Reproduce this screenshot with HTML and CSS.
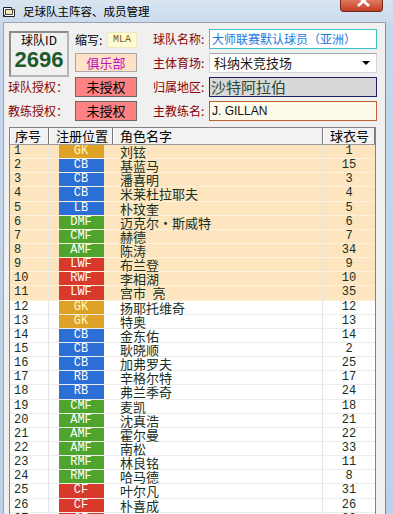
FILE: index.html
```html
<!DOCTYPE html>
<html lang="zh">
<head>
    <meta charset="UTF-8">
    <meta name="viewport" content="width=device-width, initial-scale=1.0">
    <title>足球队主阵容、成员管理</title>
    <link rel="stylesheet" href="styles.css">
</head>
<body>
    <div class="window">
        <div class="titlebar">
            <svg class="app-icon" width="14" height="13" viewBox="0 0 14 13">
                <path d="M1.5 2.5h8v2h3v7h-11z" fill="#fff" stroke="#222"/>
                <path d="M3.5 4.5h7v5h-7z" fill="#f4e9b8" stroke="#444"/>
                <path d="M1.5 11.5l2-2" stroke="#222"/>
            </svg>
            <span class="title">足球队主阵容、成员管理</span>
            <div class="close-btn">
                <svg width="43" height="12" viewBox="0 0 43 12">
                    <path d="M18 -4L29 6M29 -4L18 6" stroke="#fff" stroke-width="2.6"/>
                </svg>
            </div>
        </div>

        <div class="client">
            <div class="team-form">
                <div class="team-id">
                    <span class="id-label">球队ID</span>
                    <span class="id-value">2696</span>
                </div>
                <div class="abbr">
                    <span>缩写:</span>
                    <span class="abbr-box">MLA</span>
                </div>
                <div class="field-label">球队名称:</div>
                <div class="input input-name">大师联赛默认球员（亚洲）</div>

                <div class="club-btn">俱乐部</div>
                <div class="field-label">主体育场:</div>
                <div class="input input-select">科纳米竞技场<span class="arrow"></span></div>

                <div class="side-label">球队授权：</div>
                <div class="auth-box">未授权</div>
                <div class="field-label">归属地区:</div>
                <div class="input input-region">沙特阿拉伯</div>

                <div class="side-label">教练授权：</div>
                <div class="auth-box">未授权</div>
                <div class="field-label">主教练名:</div>
                <div class="input input-coach">J. GILLAN</div>
            </div>

            <div class="roster">
                <div class="roster-head">
                    <div class="head-cell first">序号</div>
                    <div class="head-cell">注册位置</div>
                    <div class="head-cell">角色名字</div>
                    <div class="head-cell">球衣号</div>
                </div>

                <div class="player starter"><span class="num">1</span><span class="pos"><span class="badge gk">GK</span></span><span class="name">刘铉</span><span class="shirt">1</span></div>
                <div class="player starter"><span class="num">2</span><span class="pos"><span class="badge def">CB</span></span><span class="name">基蓝马</span><span class="shirt">15</span></div>
                <div class="player starter"><span class="num">3</span><span class="pos"><span class="badge def">CB</span></span><span class="name">潘喜明</span><span class="shirt">3</span></div>
                <div class="player starter"><span class="num">4</span><span class="pos"><span class="badge def">CB</span></span><span class="name">米莱杜拉耶夫</span><span class="shirt">4</span></div>
                <div class="player starter"><span class="num">5</span><span class="pos"><span class="badge def">LB</span></span><span class="name">朴玟奎</span><span class="shirt">5</span></div>
                <div class="player starter"><span class="num">6</span><span class="pos"><span class="badge mid">DMF</span></span><span class="name">迈克尔・斯威特</span><span class="shirt">6</span></div>
                <div class="player starter"><span class="num">7</span><span class="pos"><span class="badge mid">CMF</span></span><span class="name">赫德</span><span class="shirt">7</span></div>
                <div class="player starter"><span class="num">8</span><span class="pos"><span class="badge mid">AMF</span></span><span class="name">陈涛</span><span class="shirt">34</span></div>
                <div class="player starter"><span class="num">9</span><span class="pos"><span class="badge fwd">LWF</span></span><span class="name">布兰登</span><span class="shirt">9</span></div>
                <div class="player starter"><span class="num">10</span><span class="pos"><span class="badge fwd">RWF</span></span><span class="name">李相湖</span><span class="shirt">10</span></div>
                <div class="player starter"><span class="num">11</span><span class="pos"><span class="badge fwd">LWF</span></span><span class="name">宫市&ensp;亮</span><span class="shirt">35</span></div>
                <div class="player"><span class="num">12</span><span class="pos"><span class="badge gk">GK</span></span><span class="name">扬耶托维奇</span><span class="shirt">12</span></div>
                <div class="player"><span class="num">13</span><span class="pos"><span class="badge gk">GK</span></span><span class="name">特奥</span><span class="shirt">13</span></div>
                <div class="player"><span class="num">14</span><span class="pos"><span class="badge def">CB</span></span><span class="name">金东佑</span><span class="shirt">14</span></div>
                <div class="player"><span class="num">15</span><span class="pos"><span class="badge def">CB</span></span><span class="name">耿晓顺</span><span class="shirt">2</span></div>
                <div class="player"><span class="num">16</span><span class="pos"><span class="badge def">CB</span></span><span class="name">加弗罗夫</span><span class="shirt">25</span></div>
                <div class="player"><span class="num">17</span><span class="pos"><span class="badge def">RB</span></span><span class="name">辛格尔特</span><span class="shirt">17</span></div>
                <div class="player"><span class="num">18</span><span class="pos"><span class="badge def">RB</span></span><span class="name">弗兰季奇</span><span class="shirt">24</span></div>
                <div class="player"><span class="num">19</span><span class="pos"><span class="badge mid">CMF</span></span><span class="name">麦凯</span><span class="shirt">18</span></div>
                <div class="player"><span class="num">20</span><span class="pos"><span class="badge mid">AMF</span></span><span class="name">沈真浩</span><span class="shirt">21</span></div>
                <div class="player"><span class="num">21</span><span class="pos"><span class="badge mid">AMF</span></span><span class="name">霍尔曼</span><span class="shirt">22</span></div>
                <div class="player"><span class="num">22</span><span class="pos"><span class="badge mid">AMF</span></span><span class="name">南松</span><span class="shirt">33</span></div>
                <div class="player"><span class="num">23</span><span class="pos"><span class="badge mid">RMF</span></span><span class="name">林良铭</span><span class="shirt">11</span></div>
                <div class="player"><span class="num">24</span><span class="pos"><span class="badge mid">RMF</span></span><span class="name">哈马德</span><span class="shirt">8</span></div>
                <div class="player"><span class="num">25</span><span class="pos"><span class="badge fwd">CF</span></span><span class="name">叶尔凡</span><span class="shirt">31</span></div>
                <div class="player"><span class="num">26</span><span class="pos"><span class="badge fwd">CF</span></span><span class="name">朴喜成</span><span class="shirt">26</span></div>
                <div class="player"><span class="num">27</span><span class="pos"><span class="badge fwd">CF</span></span><span class="name">朴主永</span><span class="shirt">30</span></div>
            </div>
        </div>
    </div>
</body>
</html>
```

FILE: styles.css
```css
body {
    margin: 0;
    padding: 0;
    background-color: #bcd0e8;
    font-family: "Noto Sans CJK SC", sans-serif;
}
.window {
    width: 393px;
    height: 514px;
    overflow: hidden;
    background: linear-gradient(#d9e4f0, #c6d7ec 30px, #bcd0e8);
}
.titlebar {
    height: 22px;
    display: flex;
    align-items: center;
    padding-left: 2px;
}
.app-icon {
    margin-right: 7px;
}
.title {
    font-size: 11.5px;
    color: #000;
    line-height: 22px;
}
.close-btn {
    margin-left: auto;
    margin-right: 10px;
    align-self: flex-start;
    width: 43px;
    height: 12px;
    box-sizing: border-box;
    background: linear-gradient(#e07a60, #c43c24);
    border: 1px solid #6e2a1e;
    border-top: none;
    border-radius: 0 0 4px 4px;
    overflow: hidden;
}
.close-btn svg {
    display: block;
    margin-left: -1px;
}
.client {
    margin: 0 7px 0 3px;
    height: 492px;
    box-sizing: border-box;
    background: #f0f0f0;
    border: 1px solid #98a4b2;
    border-bottom: none;
    border-right-color: #8a8a8a;
    padding: 6px 0 0 5px;
}
.team-form {
    display: grid;
    grid-template-columns: 66px 78px 56px 168px;
    grid-template-rows: repeat(4, 20px);
    row-gap: 4px;
}
.team-id {
    grid-row: span 2;
    width: 60px;
    height: 46px;
    margin-top: 2px;
    box-sizing: border-box;
    border: 2px solid #8c8c8c;
    border-right-color: #b4b4b4;
    border-bottom-color: #b4b4b4;
    display: flex;
    flex-direction: column;
    align-items: center;
}
.id-label {
    font-size: 12px;
    line-height: 14px;
    color: #000;
}
.id-value {
    font-family: "Liberation Sans", sans-serif;
    font-weight: bold;
    font-size: 22px;
    line-height: 26px;
    color: #1d5a2c;
}
.abbr {
    width: 62px;
    display: flex;
    align-items: center;
    justify-content: space-between;
    font-size: 12px;
}
.abbr-box {
    width: 30px;
    height: 16px;
    margin-top: 2px;
    box-sizing: border-box;
    background: #fffad0;
    border: 1px solid #efe8c4;
    font-family: "Liberation Mono", monospace;
    font-size: 10px;
    line-height: 14px;
    text-align: center;
    color: #7a5a10;
}
.club-btn {
    width: 62px;
    height: 19px;
    box-sizing: border-box;
    background: #ffe2c6;
    border: 1px solid #a8a8a8;
    color: #c010c0;
    font-size: 13px;
    line-height: 17px;
    text-align: center;
}
.auth-box {
    width: 62px;
    height: 20px;
    box-sizing: border-box;
    background: #ff8282;
    border: 1px solid #6a6a6a;
    color: #000;
    font-size: 13px;
    line-height: 18px;
    text-align: center;
}
.field-label, .side-label {
    color: #8b0000;
    font-size: 12px;
    line-height: 20px;
    white-space: nowrap;
}
.side-label {
    margin-left: -1px;
}
.input {
    height: 20px;
    box-sizing: border-box;
    padding: 0 2px;
    border: 1px solid #c8c8c8;
    background: #fff;
    font-size: 12px;
    line-height: 18px;
    white-space: nowrap;
    overflow: hidden;
}
.input-name {
    border-color: #3cc4c8;
    color: #1a78e0;
}
.input-select {
    display: flex;
    align-items: center;
    font-size: 13px;
    color: #1a1a1a;
    padding-left: 4px;
    border-color: #d4d4d4;
    border-top-color: #a8a8a8;
}
.arrow {
    margin-left: auto;
    margin-right: 4px;
    width: 0;
    height: 0;
    border-left: 4px solid transparent;
    border-right: 4px solid transparent;
    border-top: 4px solid #000;
}
.input-region {
    background: #d8d8d8;
    border-color: #1c2060;
    color: #2c4a30;
    font-size: 15px;
    line-height: 18px;
    padding-left: 1px;
}
.input-coach {
    background: #fffbea;
    border-color: #c0602c;
    color: #111;
    font-family: "Liberation Sans", sans-serif;
    font-size: 12px;
}
.roster {
    margin-top: 6px;
    width: 367px;
    box-sizing: border-box;
    border: 1px solid #828282;
    border-bottom: none;
    background: #fff;
}
.roster-head {
    display: grid;
    grid-template-columns: 39px 64px 210px 52px;
    height: 17px;
    box-sizing: border-box;
    background: #f2f2f2;
    border-bottom: 1px solid #9a9a9a;
}
.head-cell {
    font-size: 13px;
    line-height: 16px;
    color: #000;
    padding-left: 7px;
    border-right: 1px solid #7a7a7a;
    box-shadow: inset 1px 0 #fff;
    white-space: nowrap;
}
.head-cell.first {
    padding-left: 5px;
}
.player {
    display: grid;
    grid-template-columns: 39px 64px 210px 52px;
    height: 14.15px;
    box-sizing: border-box;
    border-bottom: 1px solid #ececec;
    color: #17301f;
    font-size: 13px;
    line-height: 13px;
    white-space: nowrap;
}
.player.starter {
    background: #fce5bf;
    border-bottom-color: #fdf0dc;
}
.num {
    padding-left: 4px;
    font-family: "Liberation Mono", monospace;
    font-size: 12px;
    border-right: 1px solid #e4e4e4;
}
.pos {
    display: flex;
    justify-content: center;
}
.badge {
    width: 45px;
    text-align: center;
    font-family: "Liberation Mono", monospace;
    font-size: 12px;
    color: #fff;
}
.badge.gk {
    background: #dea326;
    color: #fff8c8;
}
.badge.def {
    background: #2b6ed6;
}
.badge.mid {
    background: #4ea42c;
}
.badge.fwd {
    background: #d8392a;
}
.name {
    padding-left: 7px;
    border-right: 1px solid #e4e4e4;
}
.shirt {
    text-align: center;
    font-family: "Liberation Mono", monospace;
    font-size: 12px;
}
```
